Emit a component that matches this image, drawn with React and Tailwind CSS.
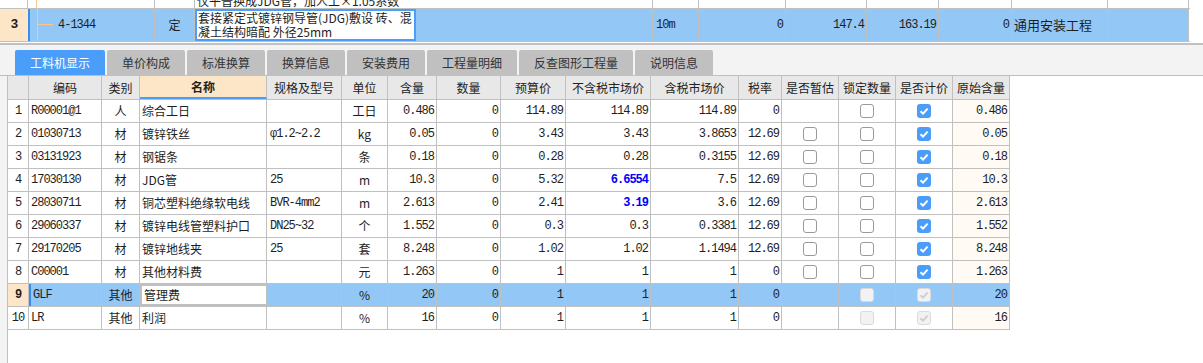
import React from "react";

const MONO = "font-['Liberation_Mono','Noto_Sans_CJK_SC',monospace] tracking-[-1px]";
const CJK = "font-['Noto_Sans_CJK_SC','Noto_Sans',sans-serif]";

const W = [
  "w-[21px]", "w-[73px]", "w-[38px]", "w-[127px]", "w-[75px]", "w-[46px]",
  "w-[49px]", "w-[64px]", "w-[65px]", "w-[85px]", "w-[88px]", "w-[43px]",
  "w-[57px]", "w-[57px]", "w-[57px]", "w-[57px]",
];

const heads = [
  "", "编码", "类别", "名称", "规格及型号", "单位", "含量", "数量", "预算价",
  "不含税市场价", "含税市场价", "税率", "是否暂估", "锁定数量", "是否计价", "原始含量",
];

const rows = [
  { n: "1", code: "R00001@1", type: "人", name: "综合工日", spec: "", unit: "工日", qty: "0.486", num: "0", budget: "114.89", notax: "114.89", tax: "114.89", rate: "0", est: null, lock: "off", price: "on", orig: "0.486" },
  { n: "2", code: "01030713", type: "材", name: "镀锌铁丝", spec: "φ1.2~2.2", unit: "kg", qty: "0.05", num: "0", budget: "3.43", notax: "3.43", tax: "3.8653", rate: "12.69", est: "off", lock: "off", price: "on", orig: "0.05" },
  { n: "3", code: "03131923", type: "材", name: "钢锯条", spec: "", unit: "条", qty: "0.18", num: "0", budget: "0.28", notax: "0.28", tax: "0.3155", rate: "12.69", est: "off", lock: "off", price: "on", orig: "0.18" },
  { n: "4", code: "17030130", type: "材", name: "JDG管", spec: "25", unit: "m", qty: "10.3", num: "0", budget: "5.32", notax: "6.6554", blue: true, tax: "7.5", rate: "12.69", est: "off", lock: "off", price: "on", orig: "10.3" },
  { n: "5", code: "28030711", type: "材", name: "铜芯塑料绝缘软电线", spec: "BVR-4mm2", unit: "m", qty: "2.613", num: "0", budget: "2.41", notax: "3.19", blue: true, tax: "3.6", rate: "12.69", est: "off", lock: "off", price: "on", orig: "2.613" },
  { n: "6", code: "29060337", type: "材", name: "镀锌电线管塑料护口", spec: "DN25~32", unit: "个", qty: "1.552", num: "0", budget: "0.3", notax: "0.3", tax: "0.3381", rate: "12.69", est: "off", lock: "off", price: "on", orig: "1.552" },
  { n: "7", code: "29170205", type: "材", name: "镀锌地线夹", spec: "25", unit: "套", qty: "8.248", num: "0", budget: "1.02", notax: "1.02", tax: "1.1494", rate: "12.69", est: "off", lock: "off", price: "on", orig: "8.248" },
  { n: "8", code: "C00001", type: "材", name: "其他材料费", spec: "", unit: "元", qty: "1.263", num: "0", budget: "1", notax: "1", tax: "1", rate: "0", est: "off", lock: "off", price: "on", orig: "1.263" },
  { n: "9", code: "GLF", type: "其他", name: "管理费", spec: "", unit: "%", qty: "20", num: "0", budget: "1", notax: "1", tax: "1", rate: "0", est: null, lock: "doff", price: "don", orig: "20", sel: true },
  { n: "10", code: "LR", type: "其他", name: "利润", spec: "", unit: "%", qty: "16", num: "0", budget: "1", notax: "1", tax: "1", rate: "0", est: null, lock: "doff", price: "don", orig: "16" },
];

const tabs = ["工料机显示", "单价构成", "标准换算", "换算信息", "安装费用", "工程量明细", "反查图形工程量", "说明信息"];

function Box({ state }) {
  if (!state) return null;
  const on = state === "on";
  const dis = state === "doff" || state === "don";
  return (
    <span
      className={
        "w-[14px] h-[14px] rounded-[3px] flex items-center justify-center " +
        (on ? "bg-[#4a9df8]" : dis ? "bg-[#f2f2f2] border border-[#dadada]" : "bg-white border border-[#9a9a9a]")
      }
    >
      {(on || state === "don") && (
        <svg width="12" height="12" viewBox="0 0 12 12">
          <polyline points="2.5,6.2 5,8.6 9.6,3.6" fill="none" stroke={on ? "#fff" : "#cfcfcf"} strokeWidth="2" />
        </svg>
      )}
    </span>
  );
}

function Cell({ i, className = "", children }) {
  return (
    <div className={`${W[i]} h-full shrink-0 border-r border-[#c0c0c0] flex items-center overflow-hidden whitespace-nowrap ${className}`}>
      {children}
    </div>
  );
}

function DataRow({ r }) {
  const bg = r.sel ? "bg-[#93c7f5]" : "bg-white";
  const num = `${MONO} justify-end pr-[2px]`;
  return (
    <div className={`flex h-[23px] border-b border-[#c0c0c0] ${bg}`}>
      <Cell i={0} className={`${MONO} justify-center ${r.sel ? "bg-[#fde6c8] font-bold" : "bg-white"}`}>{r.n}</Cell>
      <Cell i={1} className={`${MONO} pl-[2px] ${r.sel ? "border-l-2 border-l-[#3b8cf0] pl-0" : ""}`}>{r.code}</Cell>
      <Cell i={2} className={`${CJK} justify-center`}>{r.type}</Cell>
      <Cell i={3} className={`${CJK} pl-[2px] ${r.sel ? "bg-white border-2 border-[#7a7a7a]" : ""}`}>{r.name}</Cell>
      <Cell i={4} className={`${MONO} pl-[3px]`}>{r.spec}</Cell>
      <Cell i={5} className={`${CJK} justify-center`}>{r.unit}</Cell>
      <Cell i={6} className={num}>{r.qty}</Cell>
      <Cell i={7} className={num}>{r.num}</Cell>
      <Cell i={8} className={num}>{r.budget}</Cell>
      <Cell i={9} className={`${num} ${r.blue ? "text-[#0000ff] font-bold" : ""}`}>{r.notax}</Cell>
      <Cell i={10} className={num}>{r.tax}</Cell>
      <Cell i={11} className={num}>{r.rate}</Cell>
      <Cell i={12} className="justify-center"><Box state={r.est} /></Cell>
      <Cell i={13} className="justify-center"><Box state={r.lock} /></Cell>
      <Cell i={14} className="justify-center"><Box state={r.price} /></Cell>
      <Cell i={15} className={`${num} ${r.sel ? "" : "bg-[#fffaf4]"}`}>{r.orig}</Cell>
    </div>
  );
}

export default function App() {
  const blueCell = "h-full shrink-0 bg-[#93c7f5] border-r border-[#c0c0c0] flex items-center";
  const thinCell = "h-full border-r border-[#c0c0c0] shrink-0";
  return (
    <div className={`w-[1203px] h-[363px] overflow-hidden bg-white text-[12px] text-[#1e1e1e] ${CJK} flex flex-col`}>
      {/* upper grid: tail of the previous row */}
      <div className="h-[8px] flex overflow-hidden shrink-0">
        <div className={`w-[28px] ${thinCell}`} />
        <div className={`w-[127px] ${thinCell} relative`}>
          <div className="absolute left-[8px] top-0 bottom-0 w-px bg-[#f6c88c]" />
        </div>
        <div className={`w-[40px] ${thinCell}`} />
        <div className={`w-[458px] ${thinCell} pl-[2px] flex items-end overflow-hidden`}>
          <span className="leading-[15px] whitespace-nowrap">仅平普换成JDG管，加人工×1.05系数</span>
        </div>
        <div className={`w-[46px] ${thinCell}`} />
        <div className={`w-[87px] ${thinCell}`} />
        <div className={`w-[81px] ${thinCell}`} />
        <div className={`w-[72px] ${thinCell}`} />
        <div className={`w-[73px] ${thinCell}`} />
        <div className={`w-[96px] ${thinCell}`} />
        <div className={`w-[81px] ${thinCell}`} />
      </div>

      {/* selected row 3 */}
      <div className="h-[34px] flex border-y border-[#c0c0c0] w-[1190px] shrink-0">
        <div className={`w-[28px] h-full shrink-0 bg-[#fde6c8] flex items-center justify-center font-bold ${MONO} text-[13px]`}>3</div>
        <div className="w-[127px] h-full shrink-0 bg-[#93c7f5] border-l-2 border-[#3b8cf0] border-r border-r-[#c0c0c0] relative">
          <div className="absolute left-[7px] top-0 bottom-0 w-px bg-[#f6c88c]" />
          <div className="absolute left-[7px] top-[15px] w-[16px] h-px bg-[#f6c88c]" />
          <div className={`absolute left-[28px] top-0 h-full flex items-center ${MONO}`}>4-1344</div>
        </div>
        <div className={`w-[40px] ${blueCell} justify-center`}>定</div>
        <div className="w-[221px] h-full shrink-0 bg-white border-2 border-[#4a9df8] pl-[1px] leading-[14px] whitespace-nowrap overflow-hidden">
          <div>套接紧定式镀锌钢导管(JDG)敷设 砖、混</div>
          <div>凝土结构暗配 外径25mm</div>
        </div>
        <div className={`w-[237px] ${blueCell}`} />
        <div className={`w-[46px] ${blueCell} pl-[3px] ${MONO}`}>10m</div>
        <div className={`w-[87px] ${blueCell} justify-end pr-[2px] ${MONO}`}>0</div>
        <div className={`w-[81px] ${blueCell} justify-end pr-[2px] ${MONO}`}>147.4</div>
        <div className={`w-[72px] ${blueCell} justify-end pr-[2px] ${MONO}`}>163.19</div>
        <div className={`w-[73px] ${blueCell} justify-end pr-[2px] ${MONO}`}>0</div>
        <div className={`w-[96px] ${blueCell} pl-[2px] text-[13px]`}>通用安装工程</div>
        <div className={`w-[81px] ${blueCell}`} />
      </div>
      <div className="h-[1px] shrink-0" />
      <div className="h-[2px] bg-[#c0c0c0] shrink-0" />

      {/* tabs */}
      <div className="h-[31px] bg-[#f3f3f3] pl-[15px] pt-[5px] flex gap-[2px] border-b border-[#c0c0c0] shrink-0">
        {tabs.map((t, i) => (
          <div
            key={t}
            className={
              "h-[25px] px-[15px] rounded-t-[2px] flex items-center text-[12px] " +
              (i === 0 ? "bg-[#4a9df8] text-white" : "bg-[#c0c0c0] text-[#333]")
            }
          >
            {t}
          </div>
        ))}
      </div>

      {/* lower grid */}
      <div className="flex flex-1">
        <div className="w-[7px] bg-[#f3f3f3] border-r border-[#c0c0c0] shrink-0 box-content" />
        <div className="flex flex-col">
          <div className="flex h-[24px] bg-[#e8e8e8] border-b border-[#c0c0c0]">
            {heads.map((h, i) => (
              <Cell
                key={i}
                i={i}
                className={
                  "justify-center text-[#222] " +
                  (i === 3 ? "bg-[#fde6c8] font-bold border-b-2 border-b-[#4a9df8]" : "")
                }
              >
                {h}
              </Cell>
            ))}
          </div>
          {rows.map((r) => (
            <DataRow key={r.n} r={r} />
          ))}
        </div>
      </div>
    </div>
  );
}
